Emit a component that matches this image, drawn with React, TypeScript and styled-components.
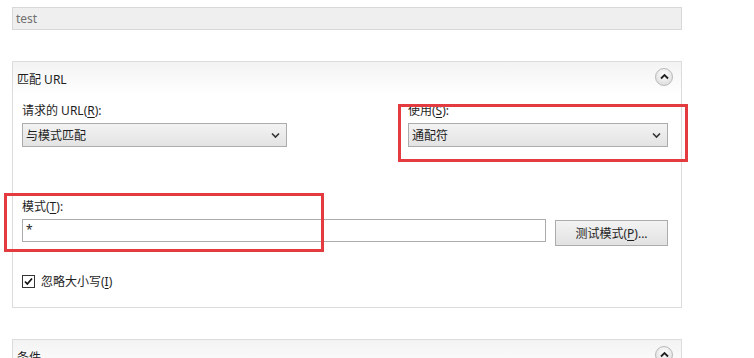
import React from "react";
import styled, { createGlobalStyle } from "styled-components";

const Global = createGlobalStyle`
  html, body { margin: 0; padding: 0; background: #ffffff; overflow: hidden; }
  body { font-family: "Noto Sans", "Noto Sans CJK SC", sans-serif; font-size: 12px; color: #1e1e1e; }
`;

const Page = styled.div`
  position: relative;
  width: 754px;
  height: 358px;
  padding: 7px 0 0 12px;
  box-sizing: border-box;
`;

const NameBox = styled.div`
  width: 670px;
  height: 23px;
  box-sizing: border-box;
  border: 1px solid #d8d8d8;
  background: #efefef;
  color: #707070;
  padding: 0 3px;
  line-height: 21px;
`;

const Section = styled.div<{ $gap: number }>`
  width: 670px;
  margin-top: ${(p) => p.$gap}px;
  box-sizing: border-box;
  border: 1px solid #dcdcdc;
  background: #fff;
`;

const Header = styled.div`
  height: 33px;
  display: flex;
  align-items: center;
  justify-content: space-between;
  padding: 0 8px 0 4px;
  background: linear-gradient(#f3f3f3, #ffffff);
  font-size: 12px;
`;

const HeaderTitle = styled.span`
  padding-top: 0px;
`;

const Body = styled.div`
  padding: 8px 13px 18px 9px;
  display: flex;
  flex-direction: column;
`;

const Row = styled.div<{ $top?: number }>`
  display: flex;
  justify-content: space-between;
  align-items: flex-start;
  margin-top: ${(p) => p.$top ?? 0}px;
`;

const Field = styled.div<{ $w?: number }>`
  display: flex;
  flex-direction: column;
  gap: 4px;
  width: ${(p) => (p.$w ? `${p.$w}px` : "auto")};
  flex: ${(p) => (p.$w ? "none" : "1")};
`;

const Label = styled.div`
  height: 16px;
  line-height: 16px;
  white-space: nowrap;
`;

const Key = styled.span`
  text-decoration: underline;
  text-underline-offset: 2px;
`;

const Select = styled.div`
  height: 24px;
  box-sizing: border-box;
  border: 1px solid #acacac;
  background: linear-gradient(#f3f3f3, #e3e3e3);
  display: flex;
  align-items: center;
  justify-content: space-between;
  padding: 0 6px 0 3px;
`;

const Input = styled.div`
  flex: 1;
  height: 23px;
  box-sizing: border-box;
  border: 1px solid #ababab;
  background: #fff;
  padding: 2px 3px 0;
  line-height: 16px;
`;

const InputRow = styled.div`
  display: flex;
  align-items: flex-end;
  gap: 9px;
`;

const Button = styled.div`
  width: 113px;
  height: 26px;
  box-sizing: border-box;
  border: 1px solid #acacac;
  background: linear-gradient(#f3f3f3, #e2e2e2);
  display: flex;
  align-items: center;
  justify-content: center;
  margin-bottom: -4px;
`;

const CheckRow = styled.div`
  display: flex;
  align-items: center;
  gap: 6px;
  margin-top: 31px;
  height: 16px;
`;

const CollapseIcon = styled.div`
  width: 16px;
  height: 16px;
  border-radius: 50%;
  border: 1px solid #b9b9b9;
  background: radial-gradient(circle at 50% 35%, #ffffff, #d6d6d6);
  display: flex;
  align-items: center;
  justify-content: center;
  margin-top: -4px;
`;

const Mark = styled.div<{ $x: number; $y: number; $w: number; $h: number }>`
  position: absolute;
  left: ${(p) => p.$x}px;
  top: ${(p) => p.$y}px;
  width: ${(p) => p.$w}px;
  height: ${(p) => p.$h}px;
  box-sizing: border-box;
  border: 3px solid #e43b40;
  pointer-events: none;
`;

const Chevron = () => (
  <svg width="9" height="7" viewBox="0 0 9 7">
    <path d="M1 1.5 L4.5 5 L8 1.5" fill="none" stroke="#333" strokeWidth="1.6" />
  </svg>
);

const Up = () => (
  <svg width="9" height="7" viewBox="0 0 9 7">
    <path d="M1 5.5 L4.5 2 L8 5.5" fill="none" stroke="#222" strokeWidth="1.8" />
  </svg>
);

const Check = () => (
  <svg width="13" height="13" viewBox="0 0 13 13">
    <rect x="0.5" y="0.5" width="12" height="12" fill="#fff" stroke="#333" />
    <path d="M3 6.5 L5.3 9 L10 3.5" fill="none" stroke="#111" strokeWidth="1.7" />
  </svg>
);

export default function App() {
  return (
    <>
      <Global />
      <Page>
        <NameBox>test</NameBox>
        <Section $gap={31}>
          <Header>
            <HeaderTitle>匹配 URL</HeaderTitle>
            <CollapseIcon>
              <Up />
            </CollapseIcon>
          </Header>
          <Body>
            <Row>
              <Field $w={265}>
                <Label>
                  请求的 URL(<Key>R</Key>):
                </Label>
                <Select>
                  <span>与模式匹配</span>
                  <Chevron />
                </Select>
              </Field>
              <Field $w={260}>
                <Label>
                  使用(<Key>S</Key>):
                </Label>
                <Select>
                  <span>通配符</span>
                  <Chevron />
                </Select>
              </Field>
            </Row>
            <Row $top={52}>
              <Field>
                <Label>
                  模式(<Key>T</Key>):
                </Label>
                <InputRow>
                  <Input>*</Input>
                  <Button>
                    测试模式(<Key>P</Key>)...
                  </Button>
                </InputRow>
              </Field>
            </Row>
            <CheckRow>
              <Check />
              <span>
                忽略大小写(<Key>I</Key>)
              </span>
            </CheckRow>
          </Body>
        </Section>
        <Section $gap={31}>
          <Header>
            <HeaderTitle>条件</HeaderTitle>
            <CollapseIcon>
              <Up />
            </CollapseIcon>
          </Header>
        </Section>
        <Mark $x={398} $y={104} $w={290} $h={58} />
        <Mark $x={4} $y={193} $w={320} $h={59} />
      </Page>
    </>
  );
}
